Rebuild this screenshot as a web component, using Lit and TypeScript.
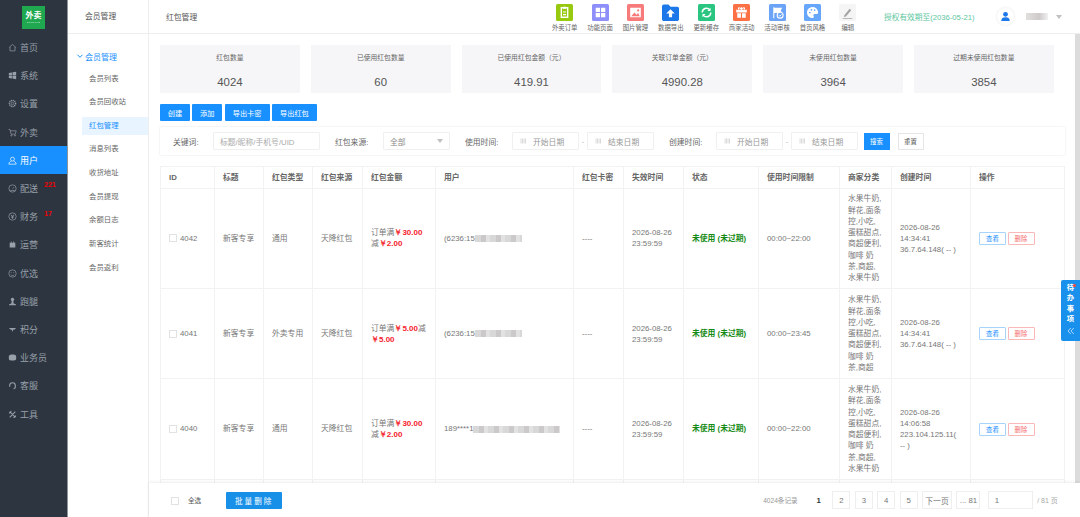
import { LitElement, css, html, svg } from "lit";
import { customElement } from "lit/decorators.js";

const stroke = (body: unknown) => html`<svg class="nav-icon" viewBox="0 0 16 16" fill="none" stroke="currentColor" stroke-width="1.2">${body}</svg>`;
const solid = (body: unknown) => html`<svg class="nav-icon" viewBox="0 0 16 16" fill="currentColor">${body}</svg>`;

const NAV = [
	{ label: "首页", icon: stroke(svg`<path d="M2 8l6-5.5L14 8M3.5 7v7h9V7"/>`) },
	{ label: "系统", icon: solid(svg`<path d="M1.5 3.5l5.5-1v5h-5.500zM8 2.300l6.500-1v6.200H8zM1.500 8.500H7v5l-5.500-1zM8 8.500h6.500v6L8 13.500z"/>`) },
	{ label: "设置", icon: stroke(svg`<circle cx="8" cy="8" r="2.200"/><circle cx="8" cy="8" r="5.500" stroke-width="2.400" stroke-dasharray="2 1.200"/>`) },
	{ label: "外卖", icon: stroke(svg`<path d="M1 2.500h2.500l2 8.500h7.500l1.500-6H4.200"/><circle cx="6" cy="13.500" r="1"/><circle cx="12.500" cy="13.500" r="1"/>`) },
	{ label: "用户", icon: stroke(svg`<circle cx="8" cy="5.500" r="3.500"/><path d="M1.500 14.500c0-3 2.500-5 4.500-5.500M14.500 14.500c0-3-2.500-5-4.500-5.500M1.500 14.500h13"/>`), active: true },
	{ label: "配送", icon: stroke(svg`<circle cx="8" cy="8" r="6.500"/><path d="M4 11.500h8M8 8.500l3-3"/>`), badge: "221" },
	{ label: "财务", icon: stroke(svg`<circle cx="8" cy="8" r="6.500"/><path d="M5.500 5l2.500 3 2.500-3M8 8v4M5.500 9h5" stroke-width="1.500"/>`), badge: "17" },
	{ label: "运营", icon: solid(svg`<path d="M3 5h10v8.500H3zM5 2.500h1.500V5H5zM9.500 2.500H11V5H9.500z"/>`) },
	{ label: "优选", icon: stroke(svg`<circle cx="8" cy="8" r="6.500"/><path d="M5 6.500h1.500M9.500 6.500H11M5 10.500c2 1.500 4 1.500 6 0"/>`) },
	{ label: "跑腿", icon: solid(svg`<circle cx="8" cy="4.500" r="3"/><path d="M6.500 7h3l.5 4.500 4 1.500v1.500H2V13l4-1.500z"/>`) },
	{ label: "积分", icon: solid(svg`<path d="M1.500 5.500h13L11 8.500H9l-1 4-1.500-4H5z"/>`) },
	{ label: "业务员", icon: solid(svg`<path d="M8 2.500c3.500 0 6.500 1.200 6.500 3v5c0 1.800-3 3-6.500 3s-6.500-1.200-6.500-3v-5c0-1.800 3-3 6.500-3z"/>`) },
	{ label: "客服", icon: stroke(svg`<path d="M3 10V8a5 5 0 0 1 10 0M13 8v3a3 3 0 0 1-3 2.500" stroke-width="2"/>`) },
	{ label: "工具", icon: stroke(svg`<path d="M3 3l10 10M13 3L3 13M2 6l4-4M10 14l4-4" stroke-width="1.800"/>`) },
];

const SUBNAV = ["会员列表", "会员回收站", "红包管理", "消息列表", "收货地址", "会员提现", "余额日志", "新客统计", "会员返利"];

const TOOLS = [
	{ label: "外卖订单", tile: "lime", icon: svg`<path d="M5 3.500h6v9H5z" fill="none" stroke="#fff" stroke-width="1.300"/><path d="M6.500 2.500h3v2h-3zM6.500 7h3v1h-3zM6.500 9.500h3v1h-3z" fill="#fff"/>` },
	{ label: "功能页面", tile: "violet", icon: svg`<path d="M3.500 3.500h4v4h-4zM8.500 3.500h4v4h-4zM3.500 8.500h4v4h-4zM8.500 8.500h4v4h-4z" fill="#fff"/>` },
	{ label: "图片管理", tile: "coral", icon: svg`<path d="M3 3.500h10v9H3z" fill="#fff"/><path d="M4 11.500l3-3.500 2 2 1.500-1.500 1.500 3z" fill="#f77b7b"/><circle cx="10.500" cy="6" r="1" fill="#f77b7b"/>` },
	{ label: "数据导出", tile: "folder", icon: svg`<path d="M0 2a1.500 1.500 0 0 1 1.500-1.500h4.500L8 2.500h6.500A1.500 1.500 0 0 1 16 4v10.500a1.500 1.500 0 0 1-1.500 1.500h-13A1.500 1.500 0 0 1 0 14.500z" fill="#1c77e8"/><path d="M8 5l4 4H9.500v3.500h-3V9H4z" fill="#fff"/>` },
	{ label: "更新缓存", tile: "mint", icon: svg`<path d="M12 8a4 4 0 0 1-7 2.700M4 8a4 4 0 0 1 7-2.700" fill="none" stroke="#fff" stroke-width="1.400"/><path d="M11.800 3.500v3h-3zM4.200 12.500v-3h3z" fill="#fff"/>` },
	{ label: "商家活动", tile: "orange", icon: svg`<path d="M3 5.500h10v2.500H3zM4 8.800h3.500V13H4zM8.500 8.800H12V13H8.500zM7.500 5.500V3h1v2.500z" fill="#fff"/><path d="M8 5.200C6 2.500 4.500 3.500 5.500 5.200M8 5.200c2-2.700 3.500-1.700 2.500 0" fill="none" stroke="#fff"/>` },
	{ label: "活动审核", tile: "sky", icon: svg`<path d="M4 3h1v10.500H4zM5 3.500h7.500L11 6l1.500 2.500H5z" fill="#fff"/><circle cx="10.500" cy="10.500" r="2.800" fill="#6ba3f7" stroke="#fff"/><path d="M9.200 10.500l1 1 1.600-1.800" fill="none" stroke="#fff" stroke-width=".8"/>` },
	{ label: "首页风格", tile: "azure", icon: svg`<path d="M8 2.800a5.200 5.200 0 1 0 0 10.400c1.500 0 1.500-1 1-1.800-.6-1 0-2 1.200-2h1.500c1.200 0 1.800-.8 1.500-2.200C12.800 4.500 10.700 2.800 8 2.800z" fill="#fff"/><circle cx="5.500" cy="8" r=".8" fill="#66a6fb"/><circle cx="7" cy="5.500" r=".8" fill="#66a6fb"/><circle cx="10" cy="5.700" r=".8" fill="#66a6fb"/>` },
	{ label: "编辑", tile: "pale", icon: svg`<path d="M5 10.500l5-6 1.500 1.300-5 6-1.800.4zM3.500 13.500h9v.6h-9z" fill="#a3a3a3"/>` },
];

const STATS = [
	["红包数量", "4024"],
	["已使用红包数量", "60"],
	["已使用红包金额（元）", "419.91"],
	["关联订单金额（元）", "4990.28"],
	["未使用红包数量", "3964"],
	["过期未使用红包数量", "3854"],
];

const COLS = [54, 49, 49, 50, 73, 138, 50, 60, 75, 81, 52, 79, 94];
const HEADS = ["ID", "标题", "红包类型", "红包来源", "红包金额", "用户", "红包卡密", "失效时间", "状态", "使用时间限制", "商家分类", "创建时间", "操作"];

const CAT_SHORT = ["水果牛奶,", "鲜花,面条", "控,小吃,", "蛋糕甜点,", "商超便利,", "咖啡 奶", "茶,商超"];
const CAT_FULL = [...CAT_SHORT.slice(0, -1), "茶,商超,", "水果牛奶"];

const ROWS = [
	{ id: 4042, kind: "通用", full: "30.00", cut: "2.00", cutFirst: false, user: "(6236:15", blur: 47, limit: "00:00~22:00", cat: CAT_FULL, time: "14:34:41", ip: ["36.7.64.148( -- )"] },
	{ id: 4041, kind: "外卖专用", full: "5.00", cut: "5.00", cutFirst: true, user: "(6236:15", blur: 47, limit: "00:00~23:45", cat: CAT_SHORT, time: "14:34:41", ip: ["36.7.64.148( -- )"] },
	{ id: 4040, kind: "通用", full: "30.00", cut: "2.00", cutFirst: false, user: "189****1", blur: 87, limit: "00:00~22:00", cat: CAT_FULL, time: "14:06:58", ip: ["223.104.125.11(", "-- )"] },
];

const calendar = html`<svg class="cal" viewBox="0 0 10 10" fill="#c9c9c9"><path d="M1 1h1.500v8H1zM3.500 1H5v8H3.500zM6 1h1.500v8H6zM8.500 1H10v8H8.500z" opacity=".75"/></svg>`;

@customElement("app-root")
export class AppRoot extends LitElement {
	private _dateRange() {
		return html`
			<div class="date">${calendar}<span>开始日期</span></div>
			<span class="dash">-</span>
			<div class="date">${calendar}<span>结束日期</span></div>
		`;
	}

	private _renderRow(row: (typeof ROWS)[number]) {
		return html`
			<tr>
				<td><span class="id-cell"><i class="check"></i>${row.id}</span></td>
				<td>新客专享</td>
				<td>${row.kind}</td>
				<td>天降红包</td>
				<td class="money">
					订单满<b>￥${row.full}</b>${row.cutFirst ? html`减<br /><b>￥${row.cut}</b>` : html`<br />减<b>￥${row.cut}</b>`}
				</td>
				<td class="user"><span>${row.user}</span><i class="smudge" style="width:${row.blur}px"></i></td>
				<td>----</td>
				<td>2026-08-26<br />23:59:59</td>
				<td class="status">未使用 (未过期)</td>
				<td>${row.limit}</td>
				<td class="cat">${row.cat.map((line) => html`${line}<br />`)}</td>
				<td class="created">2026-08-26<br />${row.time}<br />${row.ip.map((line, i) => html`${i ? html`<br />` : ""}${line}`)}</td>
				<td><span class="ops"><button class="op view">查看</button><button class="op del">删除</button></span></td>
			</tr>
		`;
	}

	render() {
		return html`
			<div class="app">
				<aside class="side">
					<div class="logo-wrap">
						<div class="logo"><b>外卖</b><small>ONLINE CLUB</small></div>
					</div>
					${NAV.map(
						(n) => html`<div class="nav ${n.active ? "on" : ""}">${n.icon}<span>${n.label}</span>${n.badge ? html`<em class="badge">${n.badge}</em>` : ""}</div>`
					)}
				</aside>
				<nav class="sub">
					<div class="sub-head">会员管理</div>
					<div class="sub-group">
						<svg viewBox="0 0 8 8" fill="none" stroke="#1890ff" stroke-width="1"><path d="M1.500 2.800L4 5.300l2.500-2.500" /></svg>会员管理
					</div>
					${SUBNAV.map((s) => html`<div class="sub-item ${s === "红包管理" ? "on" : ""}">${s}</div>`)}
				</nav>
				<main class="main">
					<header class="top">
						<div class="page-title">红包管理</div>
						<div class="tools">
							${TOOLS.map(
								(t) => html`<div class="tool">
									<svg class="tile ${t.tile}" viewBox="0 0 16 16">${t.icon}</svg>
									<span>${t.label}</span>
								</div>`
							)}
						</div>
						<div class="license">授权有效期至(2036-05-21)</div>
						<div class="avatar">
							<svg viewBox="0 0 16 16" fill="#1c77e8"><circle cx="8" cy="4.800" r="3.500" /><path d="M1.800 14.500c0-4 2.500-5.500 6.200-5.500s6.200 1.500 6.200 5.500z" /></svg>
						</div>
						<i class="name-smudge"></i>
						<i class="caret"></i>
					</header>
					<div class="body">
						<div class="scroll">
							<section class="stats">
								${STATS.map(([k, v]) => html`<div class="stat"><label>${k}</label><strong>${v}</strong></div>`)}
							</section>
							<div class="actions">
								<button class="btn w-s">创建</button>
								<button class="btn w-s">添加</button>
								<button class="btn w-l">导出卡密</button>
								<button class="btn w-l">导出红包</button>
							</div>
							<section class="filter">
								<label class="f-kw">关键词:</label>
								<div class="field f-input">标题/昵称/手机号/UID</div>
								<label class="f-src">红包来源:</label>
								<div class="field f-select">全部<i class="caret small"></i></div>
								<label class="f-use">使用时间:</label>
								${this._dateRange()}
								<label class="f-make">创建时间:</label>
								${this._dateRange()}
								<button class="search">搜索</button>
								<button class="reset">重置</button>
							</section>
							<table>
								<colgroup>${COLS.map((w) => html`<col style="width:${w}px" />`)}</colgroup>
								<thead>
									<tr>${HEADS.map((h) => html`<th>${h}</th>`)}</tr>
								</thead>
								<tbody>
									${ROWS.map((r) => this._renderRow(r))}
									<tr class="peek">${COLS.map(() => html`<td></td>`)}</tr>
								</tbody>
							</table>
						</div>
						<div class="track"></div>
						<div class="todo">
							<i class="dot"></i>
							<span>待</span><span>办</span><span>事</span><span>项</span>
							<svg viewBox="0 0 8 8" fill="none" stroke="#cfe6ff" stroke-width=".8"><path d="M3.800 1L1 4l2.800 3M6.800 1L4 4l2.800 3" /></svg>
						</div>
					</div>
					<footer class="foot">
						<i class="check all"></i>
						<span class="all-label">全选</span>
						<button class="bulk">批量删除</button>
						<div class="pager">
							<span class="total">4024条记录</span>
							<span class="cur">1</span>
							<a class="num">2</a>
							<a class="num">3</a>
							<a class="num">4</a>
							<a class="num">5</a>
							<a class="next">下一页</a>
							<a class="last">... 81</a>
							<div class="jump">1</div>
							<span class="pages">/ 81 页</span>
						</div>
					</footer>
				</main>
			</div>
		`;
	}

	static styles = css`
		:host {
			display: block;
			font-family: "Liberation Sans", "Noto Sans CJK SC", sans-serif;
			color: #666;
			font-size: 7.8px;
		}
		* {
			box-sizing: border-box;
		}
		i,
		em {
			font-style: normal;
		}
		button {
			font-family: inherit;
			border: none;
			padding: 0;
		}
		.app {
			display: flex;
			height: 100vh;
			overflow: hidden;
			background: #fff;
		}

		/* dark rail */
		.side {
			width: 68px;
			flex: none;
			background: #2d3540;
			border-right: 1px solid #8f949b;
			color: #98a0aa;
			font-size: 9px;
		}
		.logo-wrap {
			height: 33.500px;
			padding: 6px 0 0 22px;
		}
		.logo {
			width: 23px;
			height: 23px;
			background: #1fa84f;
			color: #fff;
			display: flex;
			flex-direction: column;
			align-items: center;
			justify-content: center;
			line-height: 1;
		}
		.logo b {
			font-size: 8px;
		}
		.logo small {
			font-size: 2px;
			margin-top: 1px;
			opacity: 0.7;
		}
		.nav {
			position: relative;
			height: 28.200px;
			display: flex;
			align-items: center;
			gap: 3px;
			padding-left: 8px;
		}
		.nav.on {
			background: #1890ff;
			color: #fff;
		}
		.nav-icon {
			width: 9px;
			height: 9px;
			flex: none;
		}
		.badge {
			position: absolute;
			left: 44px;
			top: 7px;
			color: #f00000;
			font-size: 7px;
			font-weight: bold;
		}

		/* second level menu */
		.sub {
			width: 81px;
			flex: none;
			border-right: 1px solid #eee;
		}
		.sub-head {
			height: 34px;
			border-bottom: 1px solid #eee;
			line-height: 34px;
			padding-left: 17px;
			color: #555;
		}
		.sub-group {
			display: flex;
			align-items: center;
			height: 16px;
			margin: 14px 0 5.500px;
			padding-left: 8px;
			color: #1890ff;
			gap: 1px;
			font-size: 8px;
		}
		.sub-group svg {
			width: 8px;
			height: 8px;
		}
		.sub-item {
			height: 18px;
			margin: 0 0 5.650px 14px;
			padding-left: 7px;
			line-height: 18px;
			color: #666;
			font-size: 7.400px;
		}
		.sub-item.on {
			background: #e8f4ff;
			color: #1890ff;
		}

		/* main */
		.main {
			flex: 1;
			min-width: 0;
			display: flex;
			flex-direction: column;
		}
		.top {
			height: 34px;
			flex: none;
			display: flex;
			align-items: center;
			border-bottom: 1px solid #eee;
		}
		.page-title {
			width: 398px;
			flex: none;
			padding-left: 17px;
			color: #555;
		}
		.tools {
			display: flex;
			width: 319px;
			flex: none;
			padding-top: 3px;
		}
		.tool {
			width: 35.400px;
			display: flex;
			flex-direction: column;
			align-items: center;
			gap: 2px;
			font-size: 6.400px;
			line-height: 9px;
			color: #666;
			white-space: nowrap;
		}
		.tile {
			width: 17px;
			height: 17px;
			border-radius: 1.500px;
		}
		.lime {
			background: #97c90f;
		}
		.violet {
			background: #8f8ffb;
		}
		.coral {
			background: #f77b7b;
		}
		.mint {
			background: #2ac681;
		}
		.orange {
			background: #fb7044;
		}
		.sky {
			background: #6ba3f7;
		}
		.azure {
			background: #66a6fb;
		}
		.pale {
			background: #f5f5f5;
		}
		.license {
			margin-left: 18px;
			width: 113px;
			flex: none;
			color: #5cc6a0;
			font-size: 7.700px;
			white-space: nowrap;
		}
		.avatar {
			width: 17px;
			height: 17px;
			border-radius: 50%;
			background: #fff;
			box-shadow: 0 0 3px #e4e4e4;
			padding: 3px;
			flex: none;
			display: flex;
		}
		.name-smudge {
			width: 22px;
			height: 7px;
			margin-left: 12px;
			background: linear-gradient(90deg, #e2dfdf, #cfcaca 60%, #f1f1f1);
			flex: none;
		}
		.caret {
			width: 0;
			height: 0;
			margin-left: 8px;
			border: 3px solid transparent;
			border-top: 4px solid #c0c0c0;
			border-bottom: none;
			flex: none;
		}
		.caret.small {
			margin-left: auto;
		}
		.body {
			position: relative;
			flex: 1;
			min-height: 0;
			display: flex;
		}
		.scroll {
			flex: 1;
			min-width: 0;
			overflow: hidden;
			padding: 11px 10px 0 11px;
		}
		.track {
			width: 5px;
			flex: none;
			background: #dcdcdc;
		}

		.stats {
			display: grid;
			grid-template-columns: repeat(6, 139.800px);
			gap: 11px;
		}
		.stat {
			height: 48px;
			background: #f6f6f9;
			display: flex;
			flex-direction: column;
			align-items: center;
			font-size: 6.800px;
			color: #666;
		}
		.stat label {
			margin-top: 7px;
		}
		.stat strong {
			margin-top: 13px;
			font-size: 11.400px;
			line-height: 14px;
			font-weight: normal;
			color: #555;
		}

		.actions {
			display: flex;
			gap: 2.300px;
			margin-top: 11px;
		}
		.btn {
			height: 17px;
			background: #1890ff;
			color: #fff;
			font-size: 7.200px;
			border-radius: 1px;
		}
		.w-s {
			width: 30px;
		}
		.w-l {
			width: 45px;
		}

		.filter {
			margin-top: 6px;
			height: 28px;
			display: flex;
			align-items: center;
			border-radius: 1px;
			box-shadow: 0 0 2px rgba(0, 0, 0, 0.14);
			color: #666;
			white-space: nowrap;
		}
		.f-kw {
			margin-left: 13px;
			width: 40px;
		}
		.f-src {
			margin-left: 15px;
			width: 48px;
		}
		.f-use {
			margin-left: 15px;
			width: 47px;
		}
		.f-make {
			margin-left: 15px;
			width: 47px;
		}
		.field,
		.date {
			height: 18px;
			border: 1px solid #f0f0f0;
			border-radius: 1px;
			display: flex;
			align-items: center;
			color: #aaa;
			flex: none;
		}
		.f-input {
			width: 107px;
			padding-left: 6px;
		}
		.f-select {
			width: 67px;
			padding: 0 6px;
			color: #888;
		}
		.date {
			width: 67px;
			padding-left: 6px;
			gap: 6px;
			color: #999;
		}
		.cal {
			width: 8px;
			height: 6px;
		}
		.dash {
			width: 8px;
			text-align: center;
			color: #bbb;
			flex: none;
		}
		.search {
			margin-left: 5.500px;
			width: 26px;
			height: 17px;
			background: #1890ff;
			color: #fff;
			font-size: 6.400px;
			flex: none;
		}
		.reset {
			margin-left: 8px;
			width: 26px;
			height: 17px;
			background: #fff;
			border: 1px solid #e6e6e6;
			color: #555;
			font-size: 6.400px;
			flex: none;
		}

		table {
			margin-top: 11px;
			width: 904px;
			table-layout: fixed;
			border-collapse: collapse;
			line-height: 11.300px;
		}
		th,
		td {
			border: 1px solid #f2f2f2;
			padding: 4.800px 0 4.800px 8px;
			color: #777;
			text-align: left;
			font-weight: normal;
			overflow: hidden;
		}
		th {
			height: 21.500px;
			padding-top: 0;
			padding-bottom: 0;
			font-weight: bold;
			color: #666;
		}
		.peek td {
			height: 40px;
		}
		.id-cell {
			display: flex;
			align-items: center;
			gap: 3px;
		}
		.check {
			width: 8px;
			height: 8px;
			border: 1px solid #e2e2e2;
			flex: none;
		}
		.money b {
			color: #f5222d;
			font-family: "Liberation Sans", sans-serif;
			font-size: 8px;
		}
		.user {
			white-space: nowrap;
		}
		.user span {
			vertical-align: middle;
		}
		.smudge {
			display: inline-block;
			height: 7px;
			vertical-align: middle;
			filter: blur(0.6px);
			background: repeating-linear-gradient(90deg, #d8d8d8 0 6px, #cbc9c9 6px 11px, #e2e2e2 11px 15px);
		}
		.status {
			color: #148a14;
			font-weight: bold;
			white-space: nowrap;
		}
		.cat,
		.created {
			white-space: nowrap;
		}
		.ops {
			display: flex;
			gap: 1.500px;
		}
		.op {
			width: 27px;
			height: 13px;
			background: #fff;
			font-size: 6.400px;
			border-radius: 1px;
		}
		.view {
			border: 1px solid #a8d4fb;
			color: #1890ff;
		}
		.del {
			border: 1px solid #fbb8b8;
			color: #f56c6c;
		}

		.todo {
			position: absolute;
			right: 0;
			top: 246px;
			width: 19px;
			height: 61px;
			background: #1890ec;
			border-radius: 2px 0 0 2px;
			color: #fff;
			font-size: 7.400px;
			display: flex;
			flex-direction: column;
			align-items: center;
			line-height: 10.400px;
			padding-top: 3px;
			font-weight: bold;
		}
		.todo svg {
			width: 8px;
			height: 8px;
			margin-top: 2px;
		}
		.dot {
			position: absolute;
			top: 4px;
			left: 12px;
			width: 3px;
			height: 3px;
			border-radius: 50%;
			background: #f5483b;
		}

		.foot {
			position: relative;
			height: 34px;
			flex: none;
			display: flex;
			align-items: center;
			padding-left: 22px;
			background: #fff;
			box-shadow: 0 -1px 3px rgba(0, 0, 0, 0.08);
		}
		.check.all {
			margin-top: 1px;
		}
		.all-label {
			margin-left: 9px;
			font-size: 6.600px;
			color: #555;
		}
		.bulk {
			margin-left: 25px;
			width: 56px;
			height: 17px;
			background: #1890e8;
			color: #fff;
			font-size: 7.600px;
			letter-spacing: 2px;
			border-radius: 1px;
		}
		.pager {
			margin-left: 481px;
			display: flex;
			align-items: center;
			gap: 4.400px;
			color: #777;
			white-space: nowrap;
		}
		.total {
			font-size: 6.600px;
			color: #999;
			width: 49px;
		}
		.cur {
			width: 11.500px;
			color: #333;
			font-weight: bold;
		}
		.num,
		.next,
		.last,
		.jump {
			height: 18px;
			border: 1px solid #eee;
			display: flex;
			align-items: center;
			justify-content: center;
			flex: none;
		}
		.num {
			width: 18px;
		}
		.next {
			width: 30px;
		}
		.last {
			width: 24px;
		}
		.jump {
			margin-left: 3px;
			width: 45px;
			justify-content: flex-start;
			padding-left: 6px;
		}
		.pages {
			color: #aaa;
			font-size: 7px;
		}
	`;
}

declare global {
	interface HTMLElementTagNameMap {
		"app-root": AppRoot;
	}
}
